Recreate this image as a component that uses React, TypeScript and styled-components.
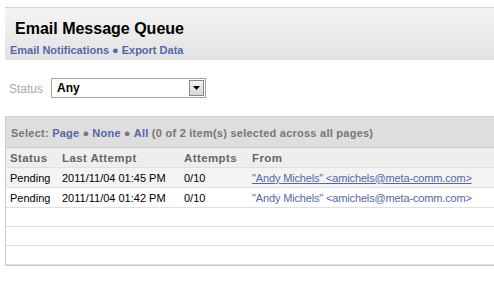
import styled, { createGlobalStyle } from 'styled-components';

const GlobalStyle = createGlobalStyle`
  body {
    margin: 0;
    background: #fff;
    font-family: 'Liberation Sans', Arial, sans-serif;
  }
`;

const Page = styled.div`
  padding: 7px 0 0 5px;
`;

const Header = styled.div`
  border-top: 1px solid #d4d4d4;
  background: linear-gradient(#f4f4f4, #e2e2e2);
  height: 53px;
  padding: 11px 0 0 10px;
  box-sizing: border-box;
`;

const Title = styled.h1`
  margin: 0;
  font-size: 16px;
  font-weight: bold;
  color: #000;
  line-height: 20px;
`;

const LinkBar = styled.div`
  margin: 4px 0 0 -5px;
  font-size: 11px;
  font-weight: bold;
  color: #5666aa;
  line-height: 14px;
`;

const NavLink = styled.a<{ underline?: boolean }>`
  color: #5666aa;
  text-decoration: ${({ underline }) => (underline ? 'underline' : 'none')};
  cursor: pointer;
`;

const Dot = styled.span`
  margin: 0 3px;
`;

const FilterRow = styled.div`
  display: flex;
  align-items: center;
  gap: 8px;
  margin: 18px 0 0 4px;
  height: 20px;
`;

const FilterLabel = styled.label`
  font-size: 12px;
  color: #a8a8a8;
  padding-top: 1px;
`;

const SelectBox = styled.div`
  display: flex;
  align-items: center;
  justify-content: space-between;
  width: 155px;
  height: 20px;
  box-sizing: border-box;
  border: 1px solid #a5a5a5;
  padding: 0 1px 0 5px;
  font-size: 12px;
  font-weight: bold;
  color: #000;
`;

const SelectArrow = styled.span`
  display: flex;
  align-items: center;
  justify-content: center;
  width: 15px;
  height: 16px;
  box-sizing: border-box;
  border: 1px solid #888;
  background: linear-gradient(#f4f4f4, #d8d8d8);
`;

const Grid = styled.div`
  margin-top: 18px;
  border-top: 1px solid #cfcfcf;
  border-left: 1px solid #cfcfcf;
  border-bottom: 1px solid #c6c6c6;
`;

const SelectBar = styled.div`
  background: #dedede;
  height: 31px;
  display: flex;
  align-items: center;
  padding: 1px 0 0 5px;
  box-sizing: border-box;
  font-size: 11px;
  font-weight: bold;
  letter-spacing: 0.25px;
  color: #777;
  border-bottom: 1px solid #c9c9c9;
`;

const Table = styled.table`
  width: 100%;
  table-layout: fixed;
  border-collapse: collapse;
  font-size: 11px;
`;

const HeadCell = styled.th<{ w?: number }>`
  text-align: left;
  font-size: 11.5px;
  letter-spacing: 0.4px;
  font-weight: bold;
  color: #666;
  background: #eeeeee;
  height: 19px;
  padding: 0 0 0 4px;
  width: ${({ w }) => (w ? `${w - 4}px` : 'auto')};
  border-bottom: 1px solid #e0e0e0;
`;

const Row = styled.tr<{ shaded?: boolean }>`
  background: ${({ shaded }) => (shaded ? '#f3f3f3' : '#fff')};
`;

const Cell = styled.td<{ empty?: boolean }>`
  height: ${({ empty }) => (empty ? 18 : 19)}px;
  padding: 0 0 0 4px;
  color: #000;
  white-space: nowrap;
  overflow: hidden;
  border-bottom: 1px solid #e0e0e0;
`;

const FromLink = styled(NavLink)`
  letter-spacing: -0.15px;
`;

const messages = [
  { status: 'Pending', last: '2011/11/04 01:45 PM', attempts: '0/10', hover: true },
  { status: 'Pending', last: '2011/11/04 01:42 PM', attempts: '0/10', hover: false },
];

export default function App() {
  return (
    <Page>
      <GlobalStyle />
      <Header>
        <Title>Email Message Queue</Title>
        <LinkBar>
          <NavLink>Email Notifications</NavLink>
          <Dot>●</Dot>
          <NavLink>Export Data</NavLink>
        </LinkBar>
      </Header>

      <FilterRow>
        <FilterLabel>Status</FilterLabel>
        <SelectBox>
          <span>Any</span>
          <SelectArrow>
            <svg width="7" height="4" viewBox="0 0 7 4">
              <path d="M0 0h7L3.5 4z" fill="#000" />
            </svg>
          </SelectArrow>
        </SelectBox>
      </FilterRow>

      <Grid>
        <SelectBar>
          Select:&nbsp;<NavLink>Page</NavLink>
          <Dot>●</Dot>
          <NavLink>None</NavLink>
          <Dot>●</Dot>
          <NavLink>All</NavLink>
          &nbsp;(0 of 2 item(s) selected across all pages)
        </SelectBar>
        <Table>
          <thead>
            <tr>
              <HeadCell w={52}>Status</HeadCell>
              <HeadCell w={122}>Last Attempt</HeadCell>
              <HeadCell w={68}>Attempts</HeadCell>
              <HeadCell>From</HeadCell>
            </tr>
          </thead>
          <tbody>
            {messages.map((m, i) => (
              <Row key={i} shaded={i === 0}>
                <Cell>{m.status}</Cell>
                <Cell>{m.last}</Cell>
                <Cell>{m.attempts}</Cell>
                <Cell>
                  <FromLink underline={m.hover}>
                    "Andy Michels" &lt;amichels@meta-comm.com&gt;
                  </FromLink>
                </Cell>
              </Row>
            ))}
            {[0, 1, 2].map((i) => (
              <Row key={`empty-${i}`}>
                <Cell colSpan={4} empty />
              </Row>
            ))}
          </tbody>
        </Table>
      </Grid>
    </Page>
  );
}
